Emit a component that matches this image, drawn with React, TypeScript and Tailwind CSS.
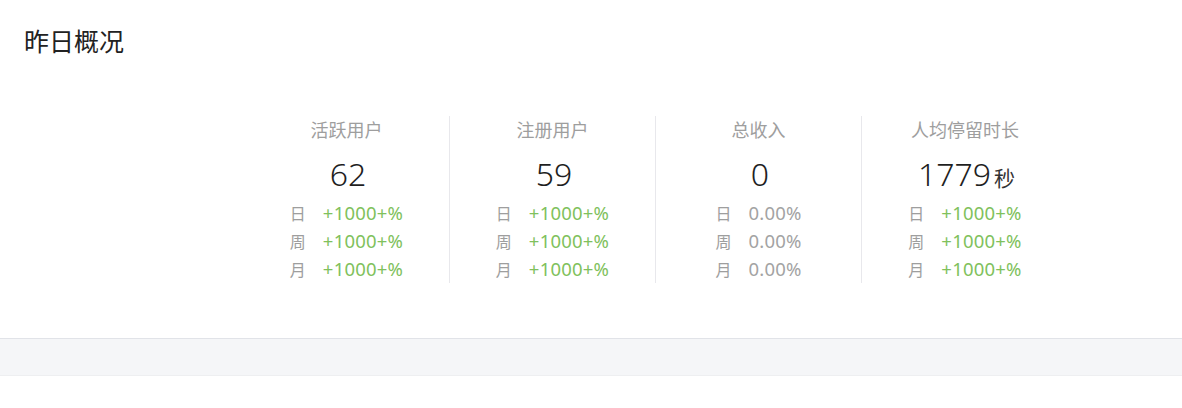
import React from "react";

type Row = { k: string; v: string; up: boolean };
type Stat = { title: string; value: string; unit?: string; rows: Row[] };

const up = (k: string): Row => ({ k, v: "+1000+%", up: true });
const flat = (k: string): Row => ({ k, v: "0.00%", up: false });

const stats: Stat[] = [
  { title: "活跃用户", value: "62", rows: [up("日"), up("周"), up("月")] },
  { title: "注册用户", value: "59", rows: [up("日"), up("周"), up("月")] },
  { title: "总收入", value: "0", rows: [flat("日"), flat("周"), flat("月")] },
  { title: "人均停留时长", value: "1779", unit: "秒", rows: [up("日"), up("周"), up("月")] },
];

const font = {
  fontFamily: '"Noto Sans", "Noto Sans CJK SC", sans-serif',
};

function StatCol({ s, last }: { s: Stat; last: boolean }) {
  return (
    <div
      className={`w-[206px] flex flex-col items-center ${last ? "" : "border-r border-[#e8e8ec]"}`}
    >
      <div className="h-[28px] leading-[28px] text-[18px] text-[#9e9e9e]">{s.title}</div>
      <div className="mt-[10px] h-[40px] leading-[40px] text-[32px] font-light text-[#1f1f1f] flex items-baseline pl-[3px]">
        <span>{s.value}</span>
        {s.unit && <span className="text-[21px] font-normal ml-[3px] text-[#333]">{s.unit}</span>}
      </div>
      <div className="mt-[5px] flex flex-col">
        {s.rows.map((r) => (
          <div key={r.k} className="h-[28px] leading-[28px] flex items-baseline">
            <span className="text-[16px] text-[#9e9e9e] w-[16px]">{r.k}</span>
            <span
              className={`ml-[17px] text-[18.5px] tracking-[0.2px] ${r.up ? "text-[#80c15c]" : "text-[#a3a3a3]"}`}
            >
              {r.v}
            </span>
          </div>
        ))}
      </div>
    </div>
  );
}

export default function App() {
  return (
    <div className="w-[1182px] h-[408px] bg-white overflow-hidden" style={font}>
      <div className="bg-white h-[338px] pt-[23px] px-[24px]">
        <div className="h-[36px] leading-[36px] text-[25px] text-[#222]">昨日概况</div>
        <div className="mt-[57px] flex pl-[220px]">
          {stats.map((s, i) => (
            <StatCol key={s.title} s={s} last={i === stats.length - 1} />
          ))}
        </div>
      </div>
      <div className="h-[38px] bg-[#f5f6f8] border-t border-[#e1e3e8] border-b border-b-[#eeeff1]"></div>
      <div className="bg-white h-[32px]"></div>
    </div>
  );
}
